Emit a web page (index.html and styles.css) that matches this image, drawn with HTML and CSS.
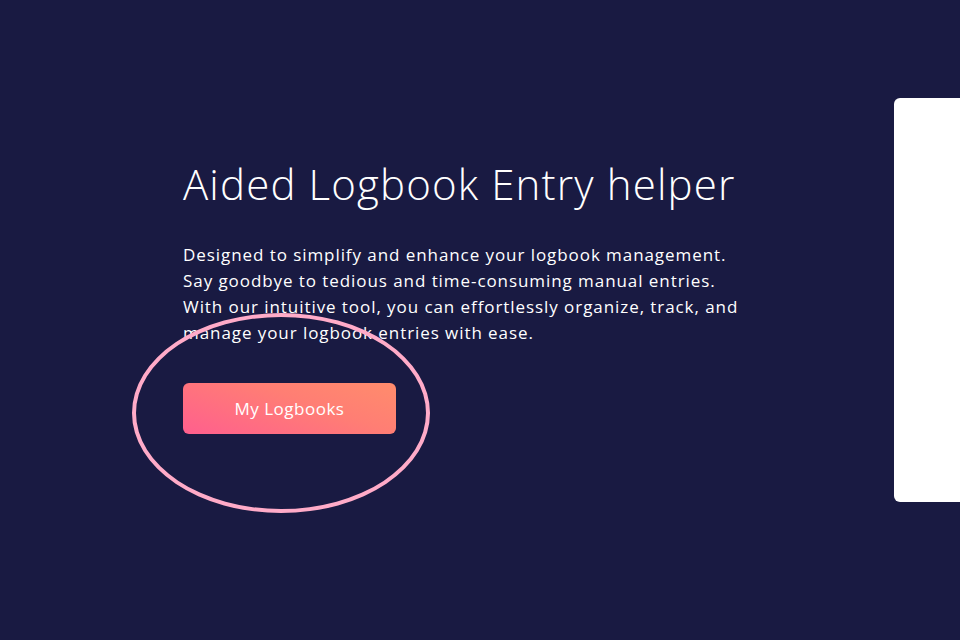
FILE: index.html
```html
<!DOCTYPE html>
<html lang="en">
<head>
<meta charset="utf-8">
<title>Aided Logbook Entry helper</title>
<link rel="stylesheet" href="styles.css">
</head>
<body>
<main class="hero">
  <section class="intro">
    <h1 class="title">Aided Logbook Entry helper</h1>
    <p class="lead">Designed to simplify and enhance your logbook management.<br>Say goodbye to tedious and time-consuming manual entries.<br>With our intuitive tool, you can effortlessly organize, track, and<br>manage your logbook entries with ease.</p>
    <div class="cta-wrap">
      <button class="cta">My Logbooks</button>
      <span class="highlight" aria-hidden="true"></span>
    </div>
  </section>
  <aside class="panel"></aside>
</main>
</body>
</html>
```
FILE: styles.css
```css
html, body {
  margin: 0;
  height: 100%;
}
body {
  background: #191a42;
  color: #ffffff;
  font-family: "Open Sans", "Noto Sans", sans-serif;
  overflow: hidden;
}
.hero {
  display: flex;
  align-items: center;
  height: 600px;
  padding-left: 183px;
  box-sizing: border-box;
}
.intro {
  width: 711px;
  flex-shrink: 0;
}
.title {
  margin: 0;
  font-size: 42px;
  font-weight: 300;
  line-height: 36px;
  letter-spacing: 1.15px;
}
.lead {
  margin: 40px 0 0;
  font-size: 17px;
  line-height: 26px;
  font-weight: 400;
  letter-spacing: 0.93px;
}
.cta-wrap {
  position: relative;
  margin-top: 37px;
  width: 213px;
}
.cta {
  display: block;
  width: 213px;
  height: 51px;
  border: 0;
  border-radius: 6px;
  background: linear-gradient(20deg, #ff5f8e 0%, #ff7e74 60%, #ff8c6c 100%);
  color: #fff;
  font-family: inherit;
  font-size: 17px;
  font-weight: 500;
  letter-spacing: 0.5px;
}
.highlight {
  position: absolute;
  left: -51px;
  top: -70px;
  width: 290px;
  height: 192px;
  border: 4px solid #ffabc8;
  border-radius: 50%;
  pointer-events: none;
}
.panel {
  width: 400px;
  height: 404px;
  flex-shrink: 0;
  background: #ffffff;
  border-radius: 6px;
}
```
